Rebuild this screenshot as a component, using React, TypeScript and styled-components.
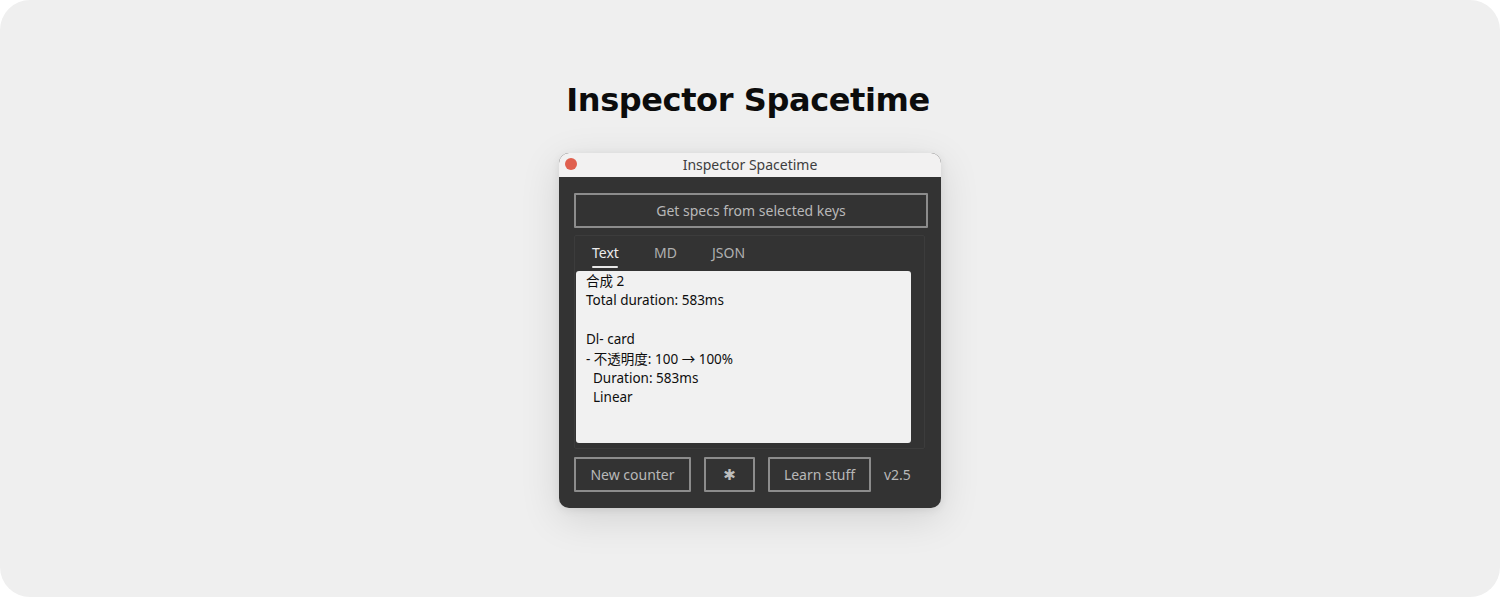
import React from 'react';
import styled, { createGlobalStyle } from 'styled-components';

const GlobalStyle = createGlobalStyle`
  html, body {
    margin: 0;
    padding: 0;
    background: #ffffff;
  }
  * {
    box-sizing: border-box;
  }
`;

const Stage = styled.div`
  width: 1500px;
  height: 597px;
  background: #efefef;
  border-radius: 30px;
  display: flex;
  flex-direction: column;
  align-items: center;
  padding-top: 78px;
`;

const Heading = styled.h1`
  margin: 0;
  font-family: 'DejaVu Sans', sans-serif;
  font-weight: 700;
  font-size: 32px;
  line-height: 44px;
  letter-spacing: -0.4px;
  color: #0c0c0c;
  margin-left: -4px;
`;

const Window = styled.div`
  margin-top: 31px;
  width: 382px;
  border-radius: 10px;
  overflow: hidden;
  background: #333333;
  box-shadow: 0 10px 40px rgba(0, 0, 0, 0.12), 0 2px 8px rgba(0, 0, 0, 0.08);
`;

const TitleBar = styled.div`
  position: relative;
  height: 24px;
  background: #f2f1f1;
  display: flex;
  align-items: center;
  justify-content: center;
  padding-bottom: 2px;
  font-family: 'Noto Sans', 'Open Sans', sans-serif;
  font-size: 14px;
  color: #3e3e3e;
`;

const CloseDot = styled.span`
  position: absolute;
  left: 6px;
  top: 5px;
  width: 12px;
  height: 12px;
  border-radius: 50%;
  background: #e0604f;
`;

const Body = styled.div`
  padding: 16px 13px 16px 15px;
  display: flex;
  flex-direction: column;
  font-family: 'Noto Sans', 'Noto Sans CJK SC', sans-serif;
`;

const OutlineButton = styled.button<{ $wide?: boolean; $w?: number }>`
  height: 35px;
  width: ${({ $wide, $w }) => ($wide ? '100%' : `${$w}px`)};
  background: transparent;
  border: 2px solid #8c8c8c;
  border-radius: 1px;
  color: #b8b8b8;
  font-family: 'Noto Sans', sans-serif;
  font-size: 14px;
  display: flex;
  align-items: center;
  justify-content: center;
  padding: 0;
`;

const Panel = styled.div`
  margin-top: 7px;
  margin-right: 3px;
  height: 214px;
  border: 1px solid #3c3c3c;
  border-radius: 2px;
  padding: 0 13px 5px 1px;
  display: flex;
  flex-direction: column;
`;

const Tabs = styled.div`
  display: flex;
  padding-left: 16px;
  height: 35px;
`;

const Tab = styled.div<{ $active?: boolean; $w: number }>`
  width: ${({ $w }) => $w}px;
  font-size: 14px;
  color: ${({ $active }) => ($active ? '#ececec' : '#b0b0b0')};
  padding-top: 7px;
  display: flex;
  flex-direction: column;
  align-items: flex-start;

  &::after {
    content: '';
    display: ${({ $active }) => ($active ? 'block' : 'none')};
    width: 26px;
    height: 2px;
    margin-top: 4px;
    background: #e8e8e8;
    border-radius: 1px;
  }
`;

const Output = styled.pre`
  margin: 0;
  flex: 1;
  background: #f1f1f1;
  border-radius: 3px;
  padding: 1px 10px 0;
  font-family: 'Noto Sans', 'Noto Sans CJK SC', sans-serif;
  font-size: 13.5px;
  line-height: 19.4px;
  color: #0e0e0e;
  white-space: pre;
`;

const Footer = styled.div`
  margin-top: 8px;
  display: flex;
  align-items: center;
  gap: 13px;
`;

const Version = styled.span`
  font-size: 14px;
  color: #b8b8b8;
`;

const Star = styled.span`
  font-size: 15px;
  color: #bdbdbd;
  font-family: 'DejaVu Sans', sans-serif;
`;

const specText = `合成 2
Total duration: 583ms

Dl- card
- 不透明度: 100 → 100%
  Duration: 583ms
  Linear`;

export default function App() {
  return (
    <>
      <GlobalStyle />
      <Stage>
        <Heading>Inspector Spacetime</Heading>
        <Window>
          <TitleBar>
            <CloseDot />
            Inspector Spacetime
          </TitleBar>
          <Body>
            <OutlineButton $wide>Get specs from selected keys</OutlineButton>
            <Panel>
              <Tabs>
                <Tab $active $w={62}>Text</Tab>
                <Tab $w={58}>MD</Tab>
                <Tab $w={50}>JSON</Tab>
              </Tabs>
              <Output>{specText}</Output>
            </Panel>
            <Footer>
              <OutlineButton $w={117}>New counter</OutlineButton>
              <OutlineButton $w={51}>
                <Star>✱</Star>
              </OutlineButton>
              <OutlineButton $w={103}>Learn stuff</OutlineButton>
              <Version>v2.5</Version>
            </Footer>
          </Body>
        </Window>
      </Stage>
    </>
  );
}
